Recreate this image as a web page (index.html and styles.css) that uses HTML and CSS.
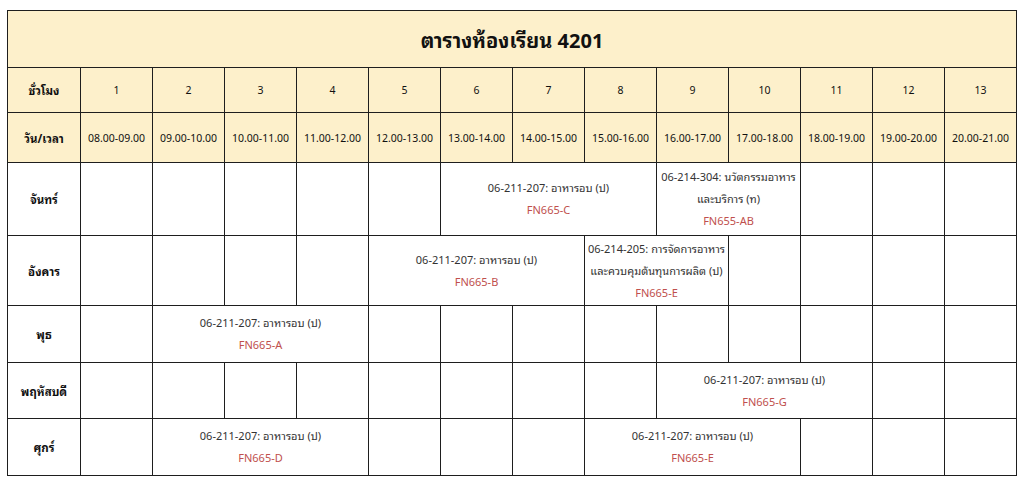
FILE: index.html
```html
<!DOCTYPE html>
<html lang="th">
<head>
<meta charset="utf-8">
<title>ตารางห้องเรียน 4201</title>
<link rel="stylesheet" href="styles.css">
</head>
<body>
<div class="page">
<table class="timetable">
  <colgroup>
    <col class="col-day">
    <col class="col-slot"><col class="col-slot"><col class="col-slot"><col class="col-slot">
    <col class="col-slot"><col class="col-slot"><col class="col-slot"><col class="col-slot">
    <col class="col-slot"><col class="col-slot"><col class="col-slot"><col class="col-slot">
    <col class="col-slot">
  </colgroup>
  <thead>
    <tr class="row-title"><th colspan="14" class="title">ตารางห้องเรียน 4201</th></tr>
    <tr class="row-hour">
      <th class="label">ชั่วโมง</th>
      <th>1</th><th>2</th><th>3</th><th>4</th><th>5</th><th>6</th><th>7</th>
      <th>8</th><th>9</th><th>10</th><th>11</th><th>12</th><th>13</th>
    </tr>
    <tr class="row-time">
      <th class="label">วัน/เวลา</th>
      <th>08.00-09.00</th><th>09.00-10.00</th><th>10.00-11.00</th><th>11.00-12.00</th>
      <th>12.00-13.00</th><th>13.00-14.00</th><th>14.00-15.00</th><th>15.00-16.00</th>
      <th>16.00-17.00</th><th>17.00-18.00</th><th>18.00-19.00</th><th>19.00-20.00</th>
      <th>20.00-21.00</th>
    </tr>
  </thead>
  <tbody>
    <tr class="row-mon">
      <th class="day">จันทร์</th>
      <td></td><td></td><td></td><td></td><td></td>
      <td colspan="3"><div class="course">06-211-207: อาหารอบ (ป)</div><div class="room">FN665-C</div></td>
      <td colspan="2"><div class="course">06-214-304: นวัตกรรมอาหาร<br>และบริการ (ท)</div><div class="room">FN655-AB</div></td>
      <td></td><td></td><td></td>
    </tr>
    <tr class="row-tue">
      <th class="day">อังคาร</th>
      <td></td><td></td><td></td><td></td>
      <td colspan="3"><div class="course">06-211-207: อาหารอบ (ป)</div><div class="room">FN665-B</div></td>
      <td colspan="2"><div class="course">06-214-205: การจัดการอาหาร<br>และควบคุมต้นทุนการผลิต (ป)</div><div class="room">FN665-E</div></td>
      <td></td><td></td><td></td><td></td>
    </tr>
    <tr class="row-wed">
      <th class="day">พุธ</th>
      <td></td>
      <td colspan="3"><div class="course">06-211-207: อาหารอบ (ป)</div><div class="room">FN665-A</div></td>
      <td></td><td></td><td></td><td></td><td></td><td></td><td></td><td></td><td></td>
    </tr>
    <tr class="row-thu">
      <th class="day">พฤหัสบดี</th>
      <td></td><td></td><td></td><td></td><td></td><td></td><td></td><td></td>
      <td colspan="3"><div class="course">06-211-207: อาหารอบ (ป)</div><div class="room">FN665-G</div></td>
      <td></td><td></td>
    </tr>
    <tr class="row-fri">
      <th class="day">ศุกร์</th>
      <td></td>
      <td colspan="3"><div class="course">06-211-207: อาหารอบ (ป)</div><div class="room">FN665-D</div></td>
      <td></td><td></td><td></td>
      <td colspan="3"><div class="course">06-211-207: อาหารอบ (ป)</div><div class="room">FN665-E</div></td>
      <td></td><td></td><td></td>
    </tr>
  </tbody>
</table>
</div>
</body>
</html>
```
FILE: styles.css
```css
html, body {
  margin: 0;
  padding: 0;
  background: #ffffff;
}

.page {
  padding: 10px 0 0 7px;
}

.timetable {
  border-collapse: collapse;
  table-layout: fixed;
  width: 1010px;
  font-family: "Noto Sans", "Noto Sans Thai Looped", "Loma", "Garuda", "Tahoma", "Noto Sans Thai", "DejaVu Sans", sans-serif;
  font-size: 11px;
  color: #222;
}

.col-day { width: 73px; }
.col-slot { width: 72px; }

.timetable th,
.timetable td {
  border: 1px solid #1e1e1e;
  padding: 0 2px;
  text-align: center;
  vertical-align: middle;
}

.timetable thead th {
  background: #fdf0cb;
  font-weight: normal;
  font-size: 10.5px;
  color: #111;
}

.timetable thead th.title {
  font-size: 20px;
  font-weight: bold;
  color: #111;
}

.timetable th.label,
.timetable th.day {
  font-weight: bold;
  font-size: 11.5px;
  color: #111;
}

.timetable tbody th.day {
  background: #ffffff;
}

.row-title { height: 57px; }
.row-hour { height: 45px; }
.row-time { height: 50px; }
.row-mon { height: 73px; }
.row-tue { height: 70px; }
.row-wed { height: 57px; }
.row-thu { height: 56px; }
.row-fri { height: 57px; }

.course {
  line-height: 22px;
  color: #333;
}

.room {
  line-height: 22px;
  color: #c0504d;
}
```
